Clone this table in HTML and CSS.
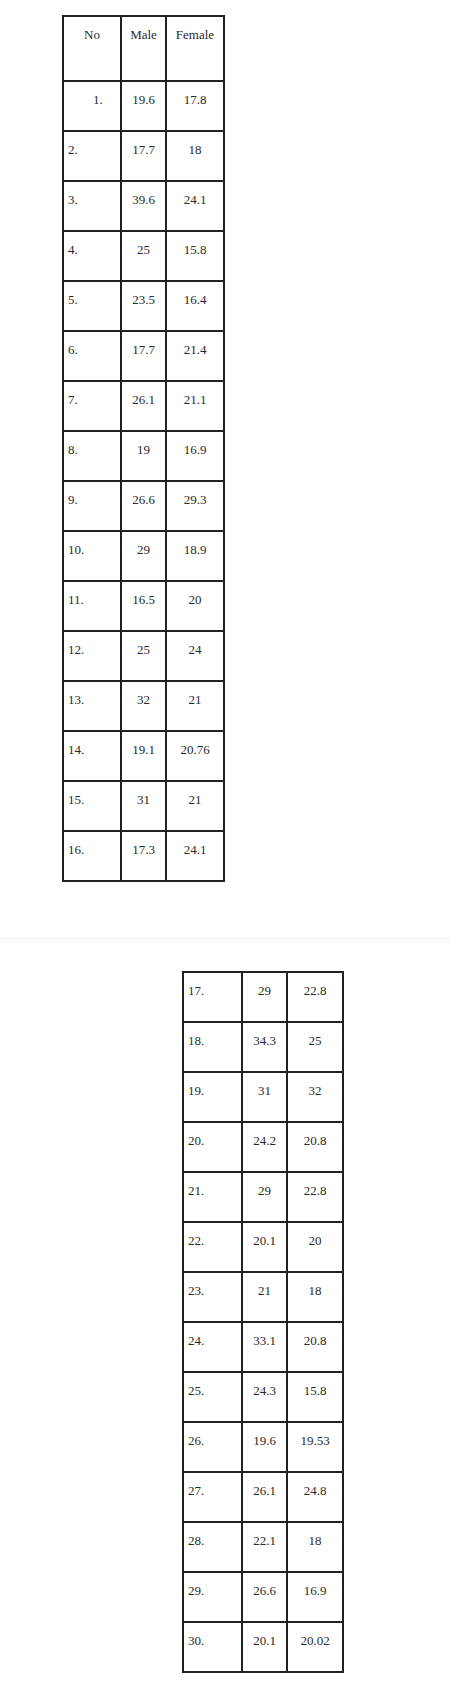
FILE: index.html
```html
<!DOCTYPE html>
<html lang="en">
<head>
<meta charset="utf-8">
<title>Male / Female table</title>
<link rel="stylesheet" href="styles.css">
</head>
<body>
<section class="page page-one">
  <table class="data data-one">
    <colgroup><col class="w-no"><col class="w-male"><col class="w-female"></colgroup>
    <thead>
      <tr class="head-row"><th>No</th><th>Male</th><th>Female</th></tr>
    </thead>
    <tbody>
      <tr><td class="no no-indent">1.</td><td class="val">19.6</td><td class="val">17.8</td></tr>
      <tr><td class="no">2.</td><td class="val">17.7</td><td class="val">18</td></tr>
      <tr><td class="no">3.</td><td class="val">39.6</td><td class="val">24.1</td></tr>
      <tr><td class="no">4.</td><td class="val">25</td><td class="val">15.8</td></tr>
      <tr><td class="no">5.</td><td class="val">23.5</td><td class="val">16.4</td></tr>
      <tr><td class="no">6.</td><td class="val">17.7</td><td class="val">21.4</td></tr>
      <tr><td class="no">7.</td><td class="val">26.1</td><td class="val">21.1</td></tr>
      <tr><td class="no">8.</td><td class="val">19</td><td class="val">16.9</td></tr>
      <tr><td class="no">9.</td><td class="val">26.6</td><td class="val">29.3</td></tr>
      <tr><td class="no">10.</td><td class="val">29</td><td class="val">18.9</td></tr>
      <tr><td class="no">11.</td><td class="val">16.5</td><td class="val">20</td></tr>
      <tr><td class="no">12.</td><td class="val">25</td><td class="val">24</td></tr>
      <tr><td class="no">13.</td><td class="val">32</td><td class="val">21</td></tr>
      <tr><td class="no">14.</td><td class="val">19.1</td><td class="val">20.76</td></tr>
      <tr><td class="no">15.</td><td class="val">31</td><td class="val">21</td></tr>
      <tr><td class="no">16.</td><td class="val">17.3</td><td class="val">24.1</td></tr>
    </tbody>
  </table>
</section>
<section class="page page-two">
  <table class="data data-two">
    <colgroup><col class="w-no2"><col class="w-male2"><col class="w-female2"></colgroup>
    <tbody>
      <tr><td class="no">17.</td><td class="val">29</td><td class="val">22.8</td></tr>
      <tr><td class="no">18.</td><td class="val">34.3</td><td class="val">25</td></tr>
      <tr><td class="no">19.</td><td class="val">31</td><td class="val">32</td></tr>
      <tr><td class="no">20.</td><td class="val">24.2</td><td class="val">20.8</td></tr>
      <tr><td class="no">21.</td><td class="val">29</td><td class="val">22.8</td></tr>
      <tr><td class="no">22.</td><td class="val">20.1</td><td class="val">20</td></tr>
      <tr><td class="no">23.</td><td class="val">21</td><td class="val">18</td></tr>
      <tr><td class="no">24.</td><td class="val">33.1</td><td class="val">20.8</td></tr>
      <tr><td class="no">25.</td><td class="val">24.3</td><td class="val">15.8</td></tr>
      <tr><td class="no">26.</td><td class="val">19.6</td><td class="val">19.53</td></tr>
      <tr><td class="no">27.</td><td class="val">26.1</td><td class="val">24.8</td></tr>
      <tr><td class="no">28.</td><td class="val">22.1</td><td class="val">18</td></tr>
      <tr><td class="no">29.</td><td class="val">26.6</td><td class="val">16.9</td></tr>
      <tr><td class="no">30.</td><td class="val">20.1</td><td class="val">20.02</td></tr>
    </tbody>
  </table>
</section>
</body>
</html>
```
FILE: styles.css
```css
html, body {
  margin: 0;
  padding: 0;
  background: #ffffff;
}

body {
  font-family: "Liberation Serif", "Times New Roman", serif;
  font-size: 13px;
  color: #2a2a2a;
}

.page {
  box-sizing: border-box;
}

.page-one {
  height: 939px;
  padding: 15px 0 0 62px;
  border-bottom: 1px solid #f1f1f1;
}

.page-two {
  padding: 32px 0 0 182px;
  height: 742px;
}

.data {
  border-collapse: separate;
  border-spacing: 0;
  table-layout: fixed;
  border-top: 2px solid #222222;
  border-left: 2px solid #222222;
}

.data-one { width: 163px; }
.data-two { width: 162px; }

.w-no { width: 58px; }
.w-male { width: 45px; }
.w-female { width: 58px; }

.w-no2 { width: 59px; }
.w-male2 { width: 45px; }
.w-female2 { width: 56px; }

.data th,
.data td {
  box-sizing: border-box;
  height: 50px;
  padding: 10px 0 0 0;
  vertical-align: top;
  border-right: 2px solid #222222;
  border-bottom: 2px solid #222222;
  font-weight: normal;
  line-height: 15px;
  white-space: nowrap;
}

.data .head-row th {
  height: 65px;
  text-align: center;
}

.data td.no {
  text-align: left;
  padding-left: 4px;
}

.data td.no-indent {
  padding-left: 29px;
}

.data td.val {
  text-align: center;
}
```
